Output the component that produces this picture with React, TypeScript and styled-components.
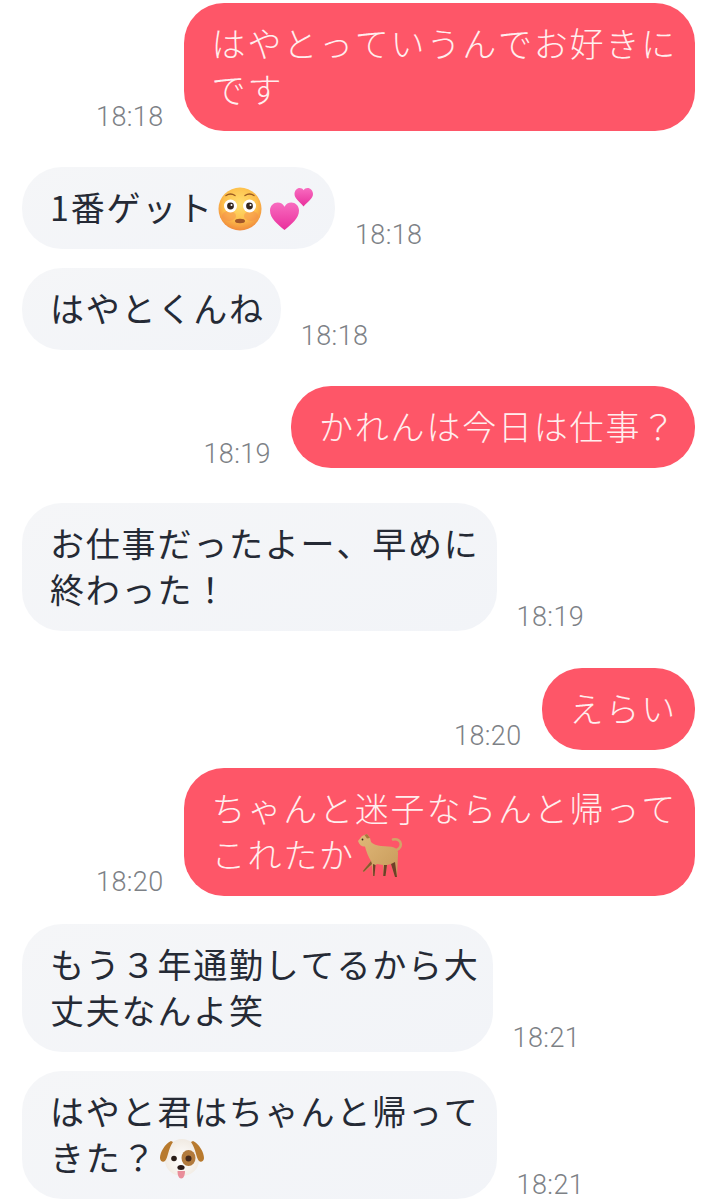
import React from 'react';
import styled, { createGlobalStyle } from 'styled-components';

const GlobalStyle = createGlobalStyle`
  html, body {
    margin: 0;
    padding: 0;
    background: #ffffff;
  }
`;

const Page = styled.div`
  width: 718px;
  height: 1200px;
  overflow: hidden;
  box-sizing: border-box;
  padding: 3px 23px 0 22px;
  display: flex;
  flex-direction: column;
  background: #ffffff;
`;

const Row = styled.div<{ $mine?: boolean; $gap: number }>`
  display: flex;
  align-items: flex-end;
  gap: 20px;
  margin-top: ${p => p.$gap}px;
  justify-content: ${p => (p.$mine ? 'flex-end' : 'flex-start')};
`;

const Bubble = styled.div<{ $mine?: boolean; $trim?: number }>`
  box-sizing: border-box;
  padding: 17px ${p => 18 - (p.$trim ?? 0)}px 19px 28px;
  border-radius: 40px;
  font-family: "Noto Sans CJK JP", "Noto Sans", sans-serif;
  font-weight: ${p => (p.$mine ? 300 : 400)};
  font-kerning: none;
  font-size: 34px;
  letter-spacing: 1.8px;
  line-height: 46px;
  white-space: nowrap;
  color: ${p => (p.$mine ? '#ffeeee' : '#252a35')};
  background: ${p => (p.$mine ? '#fe5668' : 'linear-gradient(160deg, #f5f6f8, #f2f4f8)')};
`;

const Time = styled.span`
  font-family: Roboto, "Liberation Sans", Arial, sans-serif;
  font-weight: 300;
  font-size: 27px;
  line-height: 30px;
  letter-spacing: 0.4px;
  color: #7d8186;
  margin-bottom: -1px;
`;

const Emoji = styled.svg<{ $gap?: number; $drop?: number }>`
  display: inline-block;
  width: 46px;
  height: 46px;
  vertical-align: top;
  margin-left: ${p => p.$gap ?? 0}px;
  margin-top: ${p => p.$drop ?? 0}px;
  margin-bottom: ${p => -(p.$drop ?? 0)}px;
`;

const FlushedFace = () => (
  <Emoji viewBox="0 0 46 46" $gap={3} $drop={2}>
    <defs>
      <radialGradient id="faceFill" cx="50%" cy="38%" r="62%">
        <stop offset="0%" stopColor="#ffe070" />
        <stop offset="62%" stopColor="#fdc04c" />
        <stop offset="100%" stopColor="#f08a3c" />
      </radialGradient>
    </defs>
    <circle cx="23" cy="23" r="21.5" fill="url(#faceFill)" />
    <ellipse cx="12" cy="30" rx="7" ry="5" fill="#f58a4e" opacity="0.45" />
    <ellipse cx="34" cy="30" rx="7" ry="5" fill="#f58a4e" opacity="0.45" />
    <circle cx="13.500" cy="20" r="6.500" fill="#ffffff" />
    <circle cx="32.500" cy="20" r="6.500" fill="#ffffff" />
    <circle cx="13.500" cy="20" r="3.400" fill="#33261e" />
    <circle cx="32.500" cy="20" r="3.400" fill="#33261e" />
    <circle cx="14.500" cy="19" r="1" fill="#ffffff" />
    <circle cx="33.500" cy="19" r="1" fill="#ffffff" />
    <path d="M9 9.500q4.500-3 9 0M28 9.500q4.500-3 9 0" fill="none" stroke="#9a5a22" strokeWidth="1.400" strokeLinecap="round" />
    <ellipse cx="23" cy="35" rx="5" ry="2.200" fill="#a0552a" />
  </Emoji>
);

const TwoHearts = () => (
  <Emoji viewBox="0 0 46 46" $gap={6} $drop={2}>
    <defs>
      <linearGradient id="heartFill" x1="0" y1="0" x2="0" y2="1">
        <stop offset="0%" stopColor="#f86cc0" />
        <stop offset="100%" stopColor="#e92f9c" />
      </linearGradient>
    </defs>
    <path d="M15.500 44C9 38.500 1 32.500 1 24.500 1 19.500 4.800 16.500 8.600 16.500c3 0 5.600 1.600 6.900 4.200 1.300-2.600 3.900-4.200 6.900-4.200 3.800 0 7.600 3 7.600 8 0 8-8 14-14.500 19.500z" fill="url(#heartFill)" />
    <path d="M34.500 20.500c-3.500-4.500-9-8-9-12.500 0-3.400 2.500-6 5.200-6 1.700 0 3.100.9 3.900 2.300.8-1.400 2.300-2.300 4-2.300 2.700 0 5.400 2.600 5.400 6 0 4.500-5.500 8-9.500 12.500z" fill="url(#heartFill)" />
  </Emoji>
);

const WalkingDog = () => (
  <Emoji viewBox="0 0 46 46" $gap={2} $drop={3}>
    <defs>
      <linearGradient id="dogFill" x1="0" y1="0" x2="1" y2="1">
        <stop offset="0%" stopColor="#e0b878" />
        <stop offset="100%" stopColor="#c79a5a" />
      </linearGradient>
    </defs>
    <path d="M37 16c4 .5 7-2.500 6.800-6-.2-3.500-3.800-5.500-7.800-4.500" fill="none" stroke="#d2a468" strokeWidth="2.600" strokeLinecap="round" />
    <path d="M1 7l4-5 5-2 3 4 1 4c2 2.500 6 3.500 10 4 5 .5 10 0 13 1.500 3 1.500 4.500 3.500 4 7L40 43h-2l-4-13-4 1-1.500 11h-2L26 31l-6-1-2 1.500-.5 10.500h-1.500l-1-11L6.800 38l-1-1 8.200-10c-2.500-4-5-10-6-14.500C5 13 2.500 11 1 7z" fill="url(#dogFill)" />
    <path d="M27 31l-.8 11h2.300L30 31zM34 30l4 13h2L38 28zM16 30l.2 12h1.300L18.500 31z" fill="#6e3f28" />
    <path d="M14 27L5.800 37l1 1L15 30z" fill="#8a5630" />
    <circle cx="5.500" cy="5.500" r="0.900" fill="#33231a" />
    <path d="M7.500 1L10 0l3 4-3 .5z" fill="#a9743d" />
  </Emoji>
);

const DogFace = () => (
  <Emoji viewBox="0 0 46 46" $gap={2} $drop={3}>
    <defs>
      <radialGradient id="dogHead" cx="50%" cy="55%" r="60%">
        <stop offset="0%" stopColor="#ffffff" />
        <stop offset="100%" stopColor="#efe8df" />
      </radialGradient>
    </defs>
    <path d="M6 21C7 8 15 2 23 2s16 6 17 19c1 12-9 18-17 18S5 33 6 21z" fill="url(#dogHead)" />
    <path d="M12 4C6 7 1 15 1 21c0 3 3 5 5 3 3-3 3-12 8-19zM34 4c6 3 11 11 11 17 0 3-3 5-5 3-3-3-3-12-8-19z" fill="#b87a2e" />
    <ellipse cx="29.500" cy="21" rx="7" ry="8" fill="#b27a3c" />
    <circle cx="29.500" cy="21.500" r="3" fill="#44281a" />
    <circle cx="15" cy="21.500" r="2.800" fill="#2b1e18" />
    <ellipse cx="22" cy="30.500" rx="3.600" ry="2.500" fill="#2a1a18" />
    <path d="M18.500 34c0 4 1.200 7.500 3.700 7.500s3.800-3.500 3.800-7.500z" fill="#e98d9a" />
  </Emoji>
);

export default function App() {
  return (
    <Page>
      <GlobalStyle />
      <Row $mine $gap={0}>
        <Time>18:18</Time>
        <Bubble $mine>
          はやとっていうんでお好きに
          <br />
          です
        </Bubble>
      </Row>
      <Row $gap={36}>
        <Bubble $trim={-2}>
          1番ゲット
          <FlushedFace />
          <TwoHearts />
        </Bubble>
        <Time>18:18</Time>
      </Row>
      <Row $gap={19}>
        <Bubble $trim={2}>はやとくんね</Bubble>
        <Time>18:18</Time>
      </Row>
      <Row $mine $gap={36}>
        <Time>18:19</Time>
        <Bubble $mine>かれんは今日は仕事？</Bubble>
      </Row>
      <Row $gap={35}>
        <Bubble $trim={1}>
          お仕事だったよー、早めに
          <br />
          終わった！
        </Bubble>
        <Time>18:19</Time>
      </Row>
      <Row $mine $gap={37}>
        <Time>18:20</Time>
        <Bubble $mine>えらい</Bubble>
      </Row>
      <Row $mine $gap={18}>
        <Time>18:20</Time>
        <Bubble $mine>
          ちゃんと迷子ならんと帰って
          <br />
          これたか
          <WalkingDog />
        </Bubble>
      </Row>
      <Row $gap={28}>
        <Bubble $trim={5}>
          もう３年通勤してるから大
          <br />
          丈夫なんよ笑
        </Bubble>
        <Time>18:21</Time>
      </Row>
      <Row $gap={19}>
        <Bubble $trim={1}>
          はやと君はちゃんと帰って
          <br />
          きた？
          <DogFace />
        </Bubble>
        <Time>18:21</Time>
      </Row>
    </Page>
  );
}
